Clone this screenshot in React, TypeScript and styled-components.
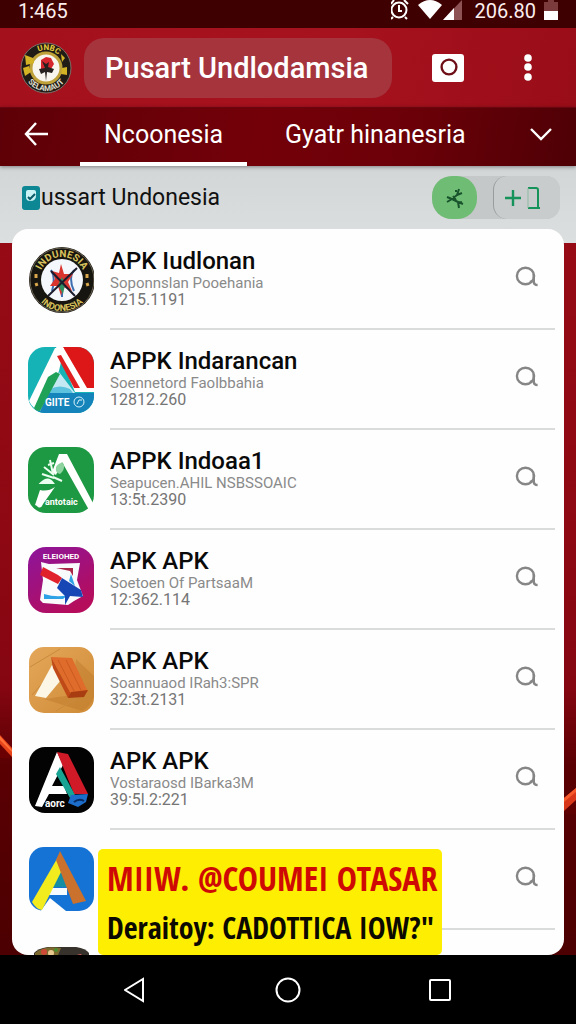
import React from "react";
import styled, { createGlobalStyle } from "styled-components";

const GlobalStyle = createGlobalStyle`
  * { box-sizing: border-box; }
  body {
    margin: 0;
    background: #000;
    font-family: Roboto, "Liberation Sans", sans-serif;
  }
  button {
    font: inherit;
    color: inherit;
    background: none;
    border: 0;
    padding: 0;
    cursor: pointer;
  }
  svg { display: block; }
  h1, h2, h3, p, ul { margin: 0; padding: 0; }
`;

const Screen = styled.div`
  display: flex;
  flex-direction: column;
  height: 100vh;
  overflow: hidden;
`;

const StatusBar = styled.div`
  display: flex;
  justify-content: space-between;
  flex: none;
  height: 28px;
  padding: 0 18px;
  background: #3f0001;
  color: #fbeeee;
  font-size: 20px;
  line-height: 22px;
`;

const StatusIcons = styled.div`
  display: flex;
  gap: 8px;
`;

const Toolbar = styled.header`
  display: flex;
  align-items: center;
  flex: none;
  height: 79px;
  padding: 0 32px 0 20px;
  background: linear-gradient(100deg, #a5101d, #a6121e 60%, #990d18);
`;

const TitlePill = styled.div`
  flex: 0 1 308px;
  height: 60px;
  margin-left: 12px;
  padding-left: 21px;
  border-radius: 20px;
  background: #a5343d;
  color: #fff;
  overflow: hidden;
`;

const AppTitle = styled.h1`
  font-size: 29px;
  font-weight: 500;
  line-height: 60px;
  white-space: nowrap;
`;

const ToolbarActions = styled.div`
  display: flex;
  align-items: center;
  gap: 48px;
  margin-left: auto;
`;

const ToolButton = styled.button`
  display: grid;
  place-items: center;
  width: 32px;
  height: 48px;
`;

const TabBar = styled.nav`
  display: flex;
  align-items: stretch;
  flex: none;
  height: 59px;
  padding: 0 20px;
  position: relative;
  z-index: 1;
  background: linear-gradient(100deg, #5e0007, #730009 45%, #6c0008 70%, #4e0005);
  border-top: 1px solid #6a0610;
  box-shadow: 0 1px 4px rgba(0, 0, 0, 0.4);
`;

const TabList = styled.div`
  display: flex;
  gap: 14px;
`;

const Tab = styled.button<{ $active?: boolean }>`
  padding: 0 24px;
  color: #fff;
  font-size: 25px;
  line-height: 52px;
  white-space: nowrap;
  border-bottom: 4px solid ${(p) => (p.$active ? "#fff" : "transparent")};
`;

const BackButton = styled(ToolButton)`
  margin-right: 28px;
  height: 52px;
`;

const MoreTabs = styled(ToolButton)`
  margin-left: auto;
  height: 52px;
  width: 30px;
`;

const Main = styled.main`
  position: relative;
  display: flex;
  flex-direction: column;
  flex: 1;
  min-height: 0;
  padding: 0 12px;
  background: linear-gradient(#d3d6d7, #dcdfdf) 0 0 / 100% 77px no-repeat,
    linear-gradient(#980b16, #8c0812 50%, #850611 66%, #5a0003 76%, #4c0001);
`;

const Glow = styled.svg<{ $side: "left" | "right"; $top: number }>`
  position: absolute;
  ${(p) => p.$side}: 0;
  top: ${(p) => p.$top}%;
`;

const SubHeader = styled.div`
  display: flex;
  align-items: center;
  flex: none;
  height: 63px;
  padding: 0 4px 0 9px;
`;

const SectionTitle = styled.h2`
  color: #111;
  font-size: 23px;
  font-weight: 400;
  line-height: 28px;
  white-space: nowrap;
`;

const ActionPill = styled.div`
  display: flex;
  justify-content: space-between;
  margin-left: auto;
  width: 128px;
  height: 43px;
  border-radius: 20px 14px 14px 20px;
  background: #c5c8c8;
`;

const RoundAction = styled.button`
  display: grid;
  place-items: center;
  width: 45px;
  border-radius: 20px;
  background: #6fbd74;
`;

const AddAction = styled.button`
  display: grid;
  place-items: center;
  width: 67px;
  padding-right: 8px;
  border-radius: 14px;
  background: #c9cccc;
  border-left: 1px solid #989c9c;
`;

const Card = styled.ul`
  flex: 1;
  min-height: 0;
  overflow: hidden;
  list-style: none;
  padding: 1px 9px 0 16px;
  background: #fefefe;
  border-radius: 16px;
  position: relative;
`;

const Row = styled.li`
  display: flex;
  height: 100px;
`;

const AppIcon = styled.svg`
  flex: none;
  width: 66px;
  height: 66px;
  margin-top: 17px;
`;

const RowBody = styled.div`
  display: flex;
  justify-content: space-between;
  flex: 1;
  margin-left: 16px;
  padding: 17px 16px 0 0;
  border-bottom: 2px solid #dadcdc;
`;

const RowTitle = styled.h3`
  color: #0a0a0a;
  font-size: 24px;
  font-weight: 500;
  line-height: 28px;
`;

const RowMeta = styled.p<{ $large?: boolean }>`
  color: ${(p) => (p.$large ? "#757575" : "#8a8a8a")};
  font-size: ${(p) => (p.$large ? 16 : 15)}px;
  line-height: ${(p) => (p.$large ? 18 : 16)}px;
`;

const SearchButton = styled.button`
  display: grid;
  place-items: center;
  width: 24px;
  height: 24px;
  margin-top: 18px;
`;

const Banner = styled.aside`
  position: absolute;
  left: 98px;
  bottom: 0;
  width: 344px;
  height: 106px;
  padding: 4px 9px 0;
  background: #fdee02;
  border-radius: 5px;
  font-family: "Noto Sans ExtraCondensed", "Open Sans Condensed", "Roboto Condensed", "Liberation Sans Narrow", sans-serif;
  font-weight: 700;
  white-space: nowrap;
`;

const BannerLine = styled.p<{ $red?: boolean }>`
  color: ${(p) => (p.$red ? "#cf0a05" : "#0c0a00")};
  font-size: ${(p) => (p.$red ? 34 : 30)}px;
  line-height: 50px;
`;

const NavBar = styled.nav`
  display: flex;
  align-items: center;
  justify-content: center;
  gap: 120px;
  flex: none;
  height: 69px;
  background: #000;
`;

const icons: Record<string, React.ReactNode> = {
  emblem: (
    <>
      <circle cx="34" cy="33" r="33" fill="#17150f" />
      <circle cx="34" cy="33" r="32" fill="none" stroke="#6c6554" strokeWidth="1" />
      <path id="arcTop" d="M11 33a23 23 0 0 1 46 0" fill="none" />
      <path id="arcBottom" d="M4 34a30 30 0 0 0 60 0" fill="none" />
      <text fontSize="10" fontWeight="700" fill="#d9c25c"><textPath href="#arcTop" startOffset="50%" textAnchor="middle">INDUNESIA</textPath></text>
      <text fontSize="9" fontWeight="700" fill="#d9c25c"><textPath href="#arcBottom" startOffset="50%" textAnchor="middle">INDONESIA</textPath></text>
      <circle cx="34" cy="33" r="21" fill="#f4f7fb" />
      <path d="M23 23q5 8 1 21M46 23q-6 8 0 21M34 36v14" stroke="#3d6fb0" strokeWidth="2" fill="none" />
      <path d="M33 17l3 10 9 0-5 8 4 9-9-4-2 9-3-10-8 0 5-7-3-8 7 2z" fill="#d9342e" />
      <path d="M30 38l4-8 3 8-2 9z" fill="#2f8f62" />
      <path d="M20 49L49 21M23 24l24 25" stroke="#1d1d2e" strokeWidth="2" />
      <path d="M8 27v4M8 36l1 3M59 27v4M59 36l1 3" stroke="#d9a84c" strokeWidth="3" />
    </>
  ),
  teal: (
    <>
      <rect width="66" height="66" rx="17" fill="#16b3b6" />
      <path d="M32 0h17a17 17 0 0 1 17 17v26H54z" fill="#dd1717" />
      <path d="M14 46h52v3a17 17 0 0 1-17 17H17q-6 0-10-4z" fill="#1584ba" />
      <path d="M31 25L21 46h26z" fill="#c5e9f2" />
      <path d="M22 42q10-5 20 0l3 4H20z" fill="#5cc2dd" />
      <path d="M27 1h9L31 24 12 64q-7-2-11-10z" fill="#fff" />
      <path d="M28 25l4 2L12 64q-4 0-6-3L20 30z" fill="#20a158" />
      <path d="M28 0h7l24 41h7v4H47z" fill="#fff" />
      <path d="M29 9l4-1 19 33h-6z" fill="#e02020" />
      <text x="17" y="59" fontSize="10" fontWeight="700" fill="#fff">GIITE</text>
      <circle cx="51" cy="55" r="5" fill="none" stroke="#d8f2fa" strokeWidth="1" />
      <path d="M49 57l2-4 3 0" fill="none" stroke="#d8f2fa" strokeWidth="1" />
    </>
  ),
  green: (
    <>
      <rect width="66" height="66" rx="18" fill="#1d9843" />
      <path d="M31 7h8l26 49-4 7L34 15l-6 13-4-3z" fill="#fff" />
      <path d="M12 43q8 2 15-3L15 57q-2 5-5 3-2-2-3-2z" fill="#fff" />
      <path d="M28 20q4-6 8-3 1 6-4 10-5-1-4-7z" fill="#8ed4a0" />
      <path d="M16 20l10 8M22 13l3 14M14 27l12 4M25 30l9 4M13 36q7-7 12 0zM20 18l6-2" stroke="#eafff0" strokeWidth="2" fill="#eafff0" />
      <text x="17" y="58" fontSize="9" fontWeight="700" fill="#fff">antotaic</text>
    </>
  ),
  purple: (
    <>
      <defs>
        <linearGradient id="plum" x1="0" y1="0" x2="0.6" y2="1">
          <stop offset="0" stopColor="#8c159c" />
          <stop offset="1" stopColor="#b50d5c" />
        </linearGradient>
      </defs>
      <rect width="66" height="66" rx="18" fill="url(#plum)" />
      <text x="33" y="12" fontSize="8" fontWeight="700" fill="#fff" textAnchor="middle">ELEIOHED</text>
      <path d="M13 15l8 2 31-1-3 17 6 16-9 5-6 4-25-2-3-3 3-20z" fill="#f8fafc" />
      <path d="M28 21h17v8l-3-5z" fill="#a92849" />
      <path d="M16 47q13 4 24 1l-5 4H16zM43 27l4 12-6-5z" fill="#2da1e6" />
      <path d="M15 20l15 8 4 3-4 6-18-9z" fill="#e0202a" />
      <path d="M34 31l19 12 2 7-13-1-5 9 0-9-8-8z" fill="#1747b5" />
    </>
  ),
  wood: (
    <>
      <defs>
        <linearGradient id="oak" x1="0" y1="0" x2="1" y2="1">
          <stop offset="0" stopColor="#e4a75a" />
          <stop offset="1" stopColor="#cf8b36" />
        </linearGradient>
      </defs>
      <rect x="1" width="65" height="66" rx="15" fill="url(#oak)" />
      <path d="M48 12l18 17v20q-3 10-12 15L16 52l28-4z" fill="#b87527" opacity="0.4" />
      <path d="M2 20l30-18M4 48l16-18M28 64l20-12" stroke="#c98b3e" strokeWidth="1" />
      <path d="M24 18l9 15-15 18-11-2z" fill="#fbf6e6" />
      <path d="M23 10l21 1 16 34-17 2z" fill="#e06c2b" />
      <path d="M23 10l20 37-3 4-15-30z" fill="#bf4a18" />
      <path d="M43 45l17-2-4 7-16 1z" fill="#a83d12" />
      <path d="M30 13l16 31M38 13l15 30" stroke="#c95a20" strokeWidth="1" />
    </>
  ),
  black: (
    <>
      <rect x="1" width="65" height="66" rx="16" fill="#030303" />
      <path d="M29 5L35 18 24 39h12l3 8H21L14 60l-7-1z" fill="#fff" />
      <path d="M29 5L40 7 60 47H46z" fill="#d11a28" />
      <path d="M32 20l15 28-5 3-14-24z" fill="#19a393" />
      <path d="M43 48l17-1-2 8-8 5-10-4z" fill="#1c6cc9" />
      <path d="M46 55q5-4 10-1" stroke="#082b62" strokeWidth="2" fill="none" />
      <text x="17" y="60" fontSize="10" fontWeight="700" fill="#fff">aorc</text>
    </>
  ),
  blue: (
    <>
      <rect x="1" width="65" height="64" rx="15" fill="#1673d6" />
      <path d="M12 65L22 51 38 64v2z" fill="#fefefe" />
      <path d="M24 41h15v7H21z" fill="#f5fbff" />
      <path d="M31 22l8 18H24z" fill="#158da3" />
      <path d="M30 10l3 15L14 63q-6-1-10-8z" fill="#f2ec1e" />
      <path d="M32 4L58 54 45 57 28 13z" fill="#c9712d" />
    </>
  ),
  food: (
    <>
      <path d="M6 6Q12-1 34-1T61 6v60H6z" fill="#37322c" />
      <path d="M7 6Q16-2 33 1l-5 12-21 4z" fill="#7d6a2f" />
      <circle cx="16" cy="5" r="3" fill="#cf4a36" />
      <circle cx="23" cy="6" r="3" fill="#e8c98d" />
      <circle cx="28" cy="3" r="2" fill="#4d8d2e" />
      <path d="M44 9l9-2 4 6H43z" fill="#dd5a5e" />
    </>
  ),
};

const apps = [
  { icon: "emblem", title: "APK Iudlonan", by: "Soponnslan Pooehania", version: "1215.1191" },
  { icon: "teal", title: "APPK Indarancan", by: "Soennetord Faolbbahia", version: "12812.260" },
  { icon: "green", title: "APPK Indoaa1", by: "Seapucen.AHIL NSBSSOAIC", version: "13:5t.2390" },
  { icon: "purple", title: "APK APK", by: "Soetoen Of PartsaaM", version: "12:362.114" },
  { icon: "wood", title: "APK APK", by: "Soannuaod IRah3:SPR", version: "32:3t.2131" },
  { icon: "black", title: "APK APK", by: "Vostaraosd IBarka3M", version: "39:5l.2:221" },
  { icon: "blue", title: "", by: "", version: "" },
  { icon: "food", title: "", by: "", version: "" },
];

function SearchIcon() {
  return (
    <svg width="24" height="24" viewBox="0 0 24 24" fill="none" stroke="#868686" strokeWidth="2.4">
      <ellipse cx="10.5" cy="11" rx="8.6" ry="8.2" />
      <path d="M18.8 9v7.500q0 3.500 3.800 3.500M15 17l4-2" />
    </svg>
  );
}

export default function App() {
  return (
    <Screen>
      <GlobalStyle />
      <StatusBar>
        <span>1:465</span>
        <StatusIcons>
          <svg width="76" height="22" viewBox="0 0 76 22">
            <circle cx="8" cy="10" r="7.5" fill="none" stroke="#fff" strokeWidth="2" />
            <path d="M8 5v6h3M0 4l3-4M13 0l4 4M2 17l-2 2M14 17l2 2" stroke="#fff" strokeWidth="2" fill="none" />
            <path d="M27 5q12-10 24 0L39 19z" fill="#fff" />
            <path d="M71 0v20H52z" fill="#8d5254" />
            <path d="M63 8v12H52z" fill="#fff" />
          </svg>
          <span>206.80</span>
          <svg width="14" height="22" viewBox="0 0 14 22">
            <path d="M4 0h6v2h4v10H0V2h4z" fill="#7b3a3c" />
            <path d="M0 11h14v9H0z" fill="#fff" />
          </svg>
        </StatusIcons>
      </StatusBar>

      <Toolbar>
        <svg width="52" height="52" viewBox="0 0 52 52">
          <circle cx="26" cy="26" r="25" fill="#221c16" stroke="#7d6f68" strokeWidth="1" />
          <circle cx="26" cy="26" r="15" fill="#f8f4ee" stroke="#bfa13a" strokeWidth="3" />
          <path id="sealTop" d="M8 26a18 18 0 0 1 36 0" fill="none" />
          <path id="sealBottom" d="M3 26a23 23 0 0 0 46 0" fill="none" />
          <text fontSize="8" fontWeight="700" fill="#e6cc3c"><textPath href="#sealTop" startOffset="55%" textAnchor="middle">UNBC</textPath></text>
          <text fontSize="8" fontWeight="700" fill="#dedccb"><textPath href="#sealBottom" startOffset="50%" textAnchor="middle">SELAMAUT</textPath></text>
          <path d="M5 13l8 3 1 5-8 2zM3 26l6-2 2 6-6 4zM47 25l-5 1-1 6 6 1zM41 12l4 4-3 4z" fill="#d4b325" />
          <path d="M21 18l5-3 5 1 3 6-3 5H21z" fill="#d5262e" />
          <path d="M22 19l3 7-6 1 2 5 4-2 1 9 1-9 5 1 2-4-6-2 1-5-3 2z" fill="#26201f" />
        </svg>
        <TitlePill>
          <AppTitle>Pusart Undlodamsia</AppTitle>
        </TitlePill>
        <ToolbarActions>
          <ToolButton aria-label="Camera">
            <svg width="32" height="28" viewBox="0 0 32 28">
              <rect x="0" y="0" width="32" height="28" rx="3" fill="#fff" />
              <circle cx="17" cy="13" r="7.4" fill="#fff" stroke="#6e0f18" strokeWidth="2.4" />
            </svg>
          </ToolButton>
          <ToolButton aria-label="More options">
            <svg width="8" height="28" viewBox="0 0 8 28" fill="#fff">
              <circle cx="4" cy="4" r="3.8" />
              <circle cx="4" cy="13" r="3.8" />
              <circle cx="4" cy="23" r="3.8" />
            </svg>
          </ToolButton>
        </ToolbarActions>
      </Toolbar>

      <TabBar>
        <BackButton aria-label="Back">
          <svg width="24" height="24" viewBox="0 0 24 24" fill="none" stroke="#fff" strokeWidth="2.4">
            <path d="M12 1L2 12l10 11M2 12h22" />
          </svg>
        </BackButton>
        <TabList>
          <Tab $active>Ncoonesia</Tab>
          <Tab>Gyatr hinanesria</Tab>
        </TabList>
        <MoreTabs aria-label="More tabs">
          <svg width="22" height="14" viewBox="0 0 22 14" fill="none" stroke="#fff" strokeWidth="2.4">
            <path d="M1 2l10 10L21 2" />
          </svg>
        </MoreTabs>
      </TabBar>

      <Main>
        <Glow $side="left" $top={70} width="12" height="40" viewBox="0 0 12 40">
          <path d="M0 22l12 18H0z" fill="#6b0002" />
          <path d="M0 17l12 13v9L0 26z" fill="#e8441c" />
          <path d="M0 18l12 14v2L0 22z" fill="#ff7136" />
        </Glow>
        <Glow $side="right" $top={77} width="12" height="40" viewBox="0 0 12 40">
          <path d="M12 14v26H0V32z" fill="#5e0002" />
          <path d="M12 14v12L0 37V24z" fill="#d8371a" />
          <path d="M12 14v4L0 28v-4z" fill="#f65a2b" />
        </Glow>
        <SubHeader>
          <svg width="20" height="26" viewBox="0 0 20 26">
            <rect x="1" y="1" width="18" height="24" rx="3" fill="#0e8795" />
            <path d="M5 7q0-2 2-2h6q2 0 2 2v4q0 5-6 5-4 0-4-4z" fill="#c9f3f4" />
            <path d="M7 12l2 2 5-5" stroke="#0a5a68" strokeWidth="2" fill="none" />
          </svg>
          <SectionTitle>ussart Undonesia</SectionTitle>
          <ActionPill>
            <RoundAction aria-label="Share">
              <svg width="20" height="24" viewBox="0 0 20 24" fill="none" stroke="#18532c" strokeWidth="2">
                <path d="M2 11l5 2 5-4 2-6M7 13l6 3 1 6M2 16l5-3M12 9l5-2M12 5l-2 0M13 16l5 2M8 10l3 4M14 17l3-1" />
              </svg>
            </RoundAction>
            <AddAction aria-label="Add">
              <svg width="38" height="24" viewBox="0 0 38 24" fill="none" stroke="#16935a" strokeWidth="2.4">
                <path d="M1 12h16M9 4v16" />
                <path d="M24 2h8q2 0 2 2v17M24 22h12" strokeWidth="2" />
                <path d="M24 2v20" stroke="#8dbba3" strokeWidth="1" />
              </svg>
            </AddAction>
          </ActionPill>
        </SubHeader>
        <Card>
          {apps.map((app) => (
            <Row key={app.icon}>
              <AppIcon viewBox="0 0 66 66" aria-hidden="true">{icons[app.icon]}</AppIcon>
              <RowBody>
                <div>
                  {app.title && <RowTitle>{app.title}</RowTitle>}
                  {app.by && <RowMeta>{app.by}</RowMeta>}
                  {app.version && <RowMeta $large>{app.version}</RowMeta>}
                </div>
                <SearchButton aria-label="Search">
                  <SearchIcon />
                </SearchButton>
              </RowBody>
            </Row>
          ))}
        </Card>
        <Banner>
          <BannerLine $red>MIIW. @COUMEI OTASAR</BannerLine>
          <BannerLine>Deraitoy: CADOTTICA IOW?"</BannerLine>
        </Banner>
      </Main>

      <NavBar>
        <ToolButton aria-label="Back">
          <svg width="24" height="26" viewBox="0 0 24 26" fill="none" stroke="#fff" strokeWidth="2">
            <path d="M19 2v22L1 13z" />
          </svg>
        </ToolButton>
        <ToolButton aria-label="Home">
          <svg width="26" height="26" viewBox="0 0 26 26" fill="none" stroke="#fff" strokeWidth="2">
            <circle cx="13" cy="13" r="11.5" />
          </svg>
        </ToolButton>
        <ToolButton aria-label="Recent apps">
          <svg width="22" height="22" viewBox="0 0 22 22" fill="none" stroke="#fff" strokeWidth="2">
            <rect x="1" y="1" width="20" height="20" rx="1" />
          </svg>
        </ToolButton>
      </NavBar>
    </Screen>
  );
}
